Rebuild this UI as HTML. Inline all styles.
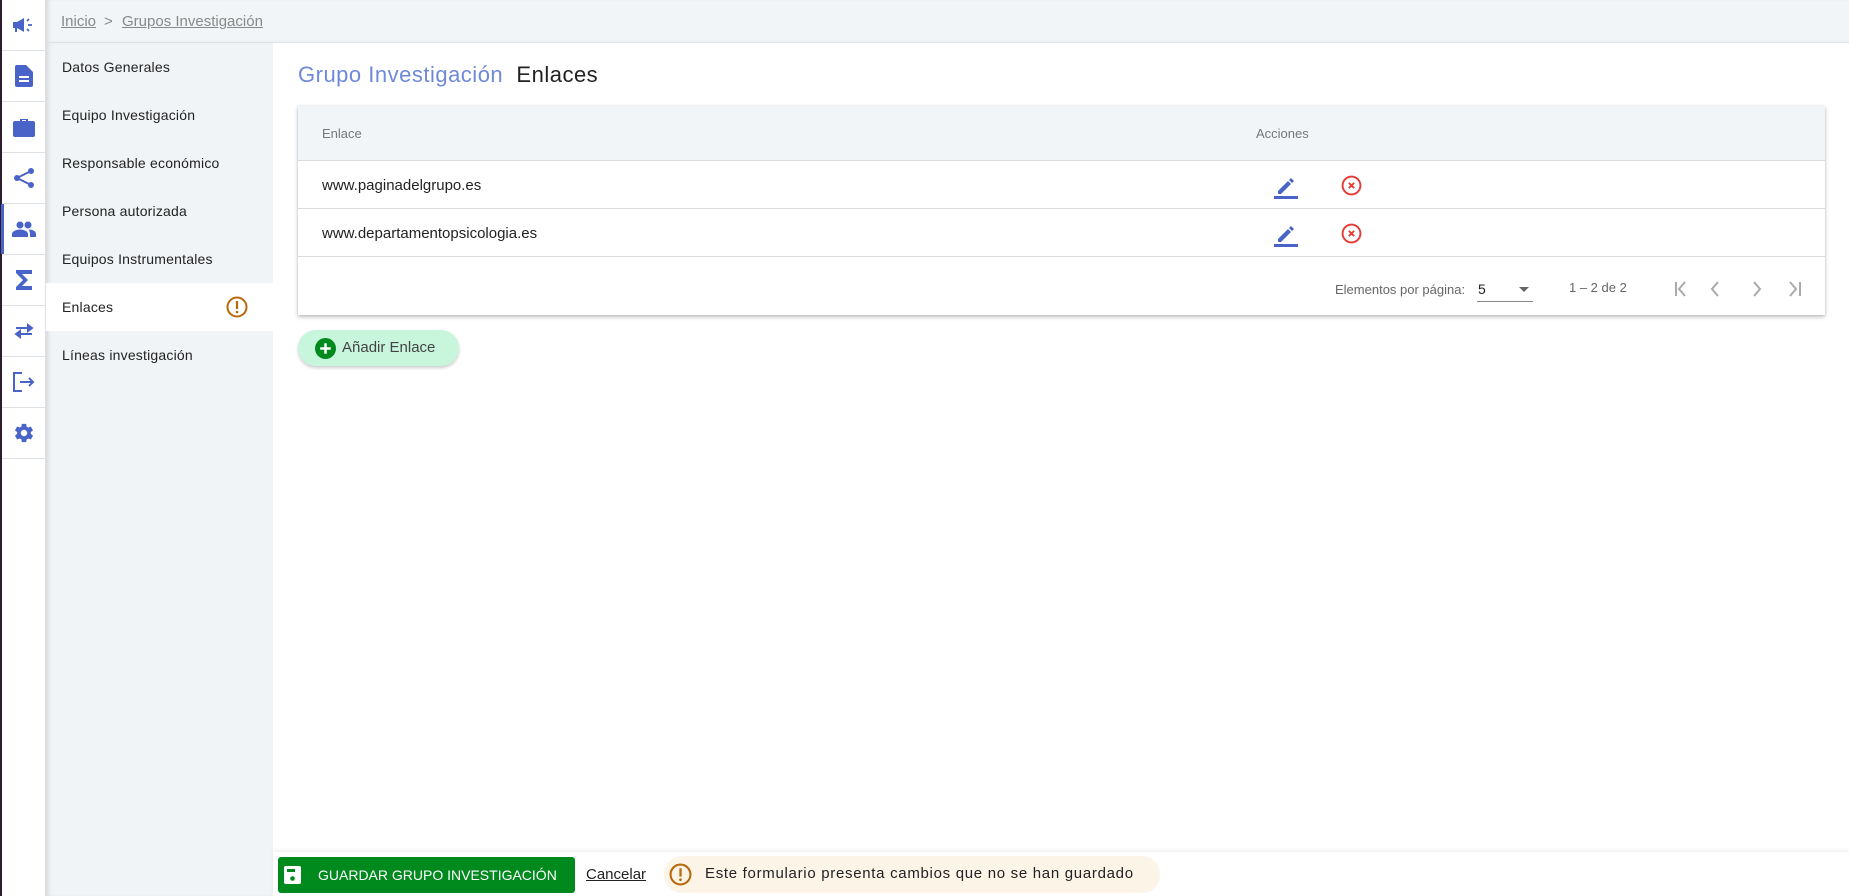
<!DOCTYPE html>
<html><head><meta charset="utf-8"><style>
*{box-sizing:border-box;margin:0;padding:0}
body{width:1849px;height:896px;overflow:hidden;background:#fff;font-family:"Liberation Sans",sans-serif;position:relative;color:#222}
.rail{position:absolute;left:0;top:0;width:46px;height:896px;background:#fff;border-left:2px solid #2b1b2b;border-right:1px solid #dde1e6}
.rail .c{height:51px;border-bottom:1px solid #dde1e6;display:flex;align-items:center;justify-content:center;position:relative}
.rail .c.act:before{content:"";position:absolute;left:-1px;top:0;bottom:0;width:3px;background:#4a63c8}
.top{position:absolute;left:46px;top:0;right:0;height:43px;background:#f2f5f8;border-bottom:1px solid #dde1e6;box-shadow:inset 4px 0 4px -2px rgba(0,0,0,.12)}
.top span{position:absolute;top:13px;font-size:15px;color:#888;text-decoration:underline}
.menu{position:absolute;left:46px;top:43px;width:227px;bottom:0;background:#f1f4f7;box-shadow:inset 4px 0 4px -2px rgba(0,0,0,.12)}
.menu div{height:48px;line-height:48px;padding-left:16px;font-size:14px;color:#222;position:relative;letter-spacing:.2px}
.menu div.act{background:#fff}
.title{position:absolute;left:298px;top:62px;font-size:22px;letter-spacing:.5px}
.card{position:absolute;left:298px;top:106px;width:1527px;height:209px;background:#fff;box-shadow:0 2px 4px rgba(0,0,0,.25),0 0 2px rgba(0,0,0,.1)}
.hd{height:55px;background:#f2f5f8;border-bottom:1px solid #dcdcdc;position:relative;font-size:13px;color:#777}
.row{height:48px;border-bottom:1px solid #dcdcdc;position:relative;font-size:15px}
.row span{position:absolute;left:24px;top:16px}
.pg{position:absolute;font-size:13px;color:#666}
.add{position:absolute;left:298px;top:330px;width:161px;height:36px;border-radius:18px;background:#c8f6dd;box-shadow:0 2px 3px rgba(0,0,0,.2);font-size:15px;color:#444}
.bot{position:absolute;left:273px;top:852px;right:0;bottom:0;background:#fff;box-shadow:0 -2px 4px rgba(0,0,0,.06)}
.save{position:absolute;left:278px;top:857px;width:297px;height:36px;background:#008a1e;border-radius:3px;color:#fff;font-size:14px}
.msg{position:absolute;left:664px;top:856px;width:496px;height:37px;border-radius:18px;background:#fdf4e8;font-size:15px}
</style></head><body>
<div class="rail">
<div class="c"><svg width="24" height="20" viewBox="0 0 24 20"><path d="M1 7h4l7-4v14l-7-4H5v4H3v-4H1z" fill="#4a63c8"/><path d="M15 6l2-2M15 14l2 2M16 10h4" stroke="#4a63c8" stroke-width="1.8"/></svg></div>
<div class="c"><svg width="18" height="22" viewBox="0 0 18 22"><path d="M2 0h9l7 7v13a2 2 0 0 1-2 2H2a2 2 0 0 1-2-2V2a2 2 0 0 1 2-2z" fill="#4a63c8"/><path d="M4 12h10M4 16h10" stroke="#fff" stroke-width="2"/></svg></div>
<div class="c"><svg width="22" height="20" viewBox="0 0 22 20"><path d="M7 4V2h8v2h5a2 2 0 0 1 2 2v12a2 2 0 0 1-2 2H2a2 2 0 0 1-2-2V6a2 2 0 0 1 2-2z" fill="#4a63c8"/><path d="M9 4V3h4v1z" fill="#fff"/></svg></div>
<div class="c"><svg width="22" height="22" viewBox="0 0 22 22"><circle cx="18" cy="4" r="3" fill="#4a63c8"/><circle cx="4" cy="11" r="3" fill="#4a63c8"/><circle cx="18" cy="18" r="3" fill="#4a63c8"/><path d="M18 4L4 11l14 7" stroke="#4a63c8" stroke-width="2" fill="none"/></svg></div>
<div class="c act"><svg width="24" height="16" viewBox="0 0 24 16"><circle cx="8" cy="4" r="3.5" fill="#4a63c8"/><circle cx="16" cy="4" r="3.5" fill="#4a63c8"/><path d="M0 16v-3c0-3 5-4.5 8-4.5s8 1.5 8 4.5v3zM17 8.5c3 0 7 1.5 7 4.5v3h-6v-3c0-2-1-3.5-1-4.5z" fill="#4a63c8"/></svg></div>
<div class="c"><svg width="16" height="20" viewBox="0 0 16 20"><path d="M0 0h16v4H6l6 6-6 6h10v4H0v-3l7-7-7-7z" fill="#4a63c8"/></svg></div>
<div class="c"><svg width="20" height="16" viewBox="0 0 20 16"><path d="M6 11h12M2 11l4-3v6zM14 5H2M18 5l-4-3v6z" stroke="#4a63c8" stroke-width="2" fill="#4a63c8"/></svg></div>
<div class="c"><svg width="22" height="20" viewBox="0 0 22 20"><path d="M9 1H1v18h8" stroke="#4a63c8" stroke-width="2" fill="none"/><path d="M7 10h13M16 6l4 4-4 4" stroke="#4a63c8" stroke-width="2" fill="none"/></svg></div>
<div class="c"><svg width="22" height="22" viewBox="0 0 24 24"><path fill="#4a63c8" d="M19.4 13c.04-.3.06-.6.06-1s-.02-.7-.07-1l2.1-1.6c.2-.15.24-.42.12-.64l-2-3.460c-.12-.22-.39-.3-.61-.22l-2.5 1c-.52-.4-1.08-.73-1.690-.98l-.38-2.65A.49.49 0 0 0 14 2h-4c-.25 0-.46.18-.49.42l-.38 2.65c-.61.25-1.17.59-1.69.98l-2.49-1c-.23-.09-.49 0-.61.22l-2 3.46c-.13.22-.07.49.12.64L4.57 11c-.04.3-.07.66-.07 1s.02.7.07 1l-2.11 1.65c-.19.15-.24.42-.12.64l2 3.46c.12.22.39.3.61.22l2.49-1c.52.4 1.08.73 1.69.98l.38 2.65c.03.24.24.42.49.42h4c.25 0 .46-.18.49-.42l.38-2.65c.61-.25 1.17-.59 1.69-.98l2.49 1c.23.09.49 0 .61-.22l2-3.46c.12-.22.07-.49-.12-.64zM12 15.5A3.5 3.5 0 1 1 12 8.5a3.5 3.5 0 0 1 0 7z"/></svg></div>
</div>
<div class="top"><span style="left:15px">Inicio</span><span style="left:58px;text-decoration:none">&gt;</span><span style="left:76px">Grupos Investigación</span></div>
<div class="menu">
<div>Datos Generales</div><div>Equipo Investigación</div><div>Responsable económico</div><div>Persona autorizada</div><div>Equipos Instrumentales</div>
<div class="act">Enlaces<svg style="position:absolute;left:180px;top:13px" width="22" height="22" viewBox="0 0 22 22"><circle cx="11" cy="11" r="9.5" stroke="#b8690a" stroke-width="2" fill="none"/><path d="M11 5v8" stroke="#b8690a" stroke-width="2.2"/><circle cx="11" cy="16" r="1.3" fill="#b8690a"/></svg></div>
<div>Líneas investigación</div>
</div>
<div class="title"><span style="color:#6e89d8">Grupo Investigación</span>&nbsp; <span>Enlaces</span></div>
<div class="card">
<div class="hd"><span style="position:absolute;left:24px;top:20px">Enlace</span><span style="position:absolute;left:958px;top:20px">Acciones</span></div>
<div class="row"><span>www.paginadelgrupo.es</span>
<svg style="position:absolute;left:976px;top:14px" width="24" height="24" viewBox="0 0 24 24"><path d="M4 16l10-10 3 3-10 10H4zM15 5l2-2 3 3-2 2z" fill="#4a63c8"/><rect x="0" y="21" width="24" height="3" fill="#4a63c8"/></svg>
<svg style="position:absolute;left:1043px;top:14px" width="21" height="21" viewBox="0 0 20 20"><circle cx="10" cy="10" r="8.5" stroke="#e53935" stroke-width="1.8" fill="none"/><path d="M7.5 7.5l5 5M12.5 7.5l-5 5" stroke="#e53935" stroke-width="1.8"/></svg></div>
<div class="row"><span>www.departamentopsicologia.es</span>
<svg style="position:absolute;left:976px;top:14px" width="24" height="24" viewBox="0 0 24 24"><path d="M4 16l10-10 3 3-10 10H4zM15 5l2-2 3 3-2 2z" fill="#4a63c8"/><rect x="0" y="21" width="24" height="3" fill="#4a63c8"/></svg>
<svg style="position:absolute;left:1043px;top:14px" width="21" height="21" viewBox="0 0 20 20"><circle cx="10" cy="10" r="8.5" stroke="#e53935" stroke-width="1.8" fill="none"/><path d="M7.5 7.5l5 5M12.5 7.5l-5 5" stroke="#e53935" stroke-width="1.8"/></svg></div>
<span class="pg" style="left:1037px;top:176px">Elementos por página:</span>
<span class="pg" style="left:1180px;top:175px;color:#222;font-size:14px">5</span>
<div style="position:absolute;left:1179px;top:195px;width:56px;height:1px;background:#888"></div>
<div style="position:absolute;left:1221px;top:181px;border:5px solid transparent;border-top-color:#666"></div>
<span class="pg" style="left:1271px;top:174px">1 – 2 de 2</span>
<svg style="position:absolute;left:1370px;top:172px" width="140" height="22" viewBox="0 0 140 22" fill="none" stroke="#aaa" stroke-width="2"><path d="M8 4v14M17 4l-6 7 6 7M50 4l-6 7 6 7M86 4l6 7-6 7M122 4l6 7-6 7M132 4v14"/></svg>
</div>
<div class="add"><svg style="position:absolute;left:17px;top:8px" width="21" height="21" viewBox="0 0 20 20"><circle cx="10" cy="10" r="10" fill="#008a1e"/><path d="M10 5v10M5 10h10" stroke="#fff" stroke-width="2.4"/></svg><span style="position:absolute;left:44px;top:9px">Añadir Enlace</span></div>
<div class="bot"></div>
<div class="save"><svg style="position:absolute;left:6px;top:9px" width="17" height="18" viewBox="0 0 17 18"><rect width="17" height="18" rx="2" fill="#fff"/><rect x="3" y="3" width="8" height="3" fill="#008a1e"/><circle cx="8.5" cy="12.5" r="2.3" fill="#008a1e"/></svg><span style="position:absolute;left:40px;top:10px">GUARDAR GRUPO INVESTIGACIÓN</span></div>
<span style="position:absolute;left:586px;top:866px;font-size:15px;text-decoration:underline">Cancelar</span>
<div class="msg"><svg style="position:absolute;left:5px;top:7px" width="23" height="23" viewBox="0 0 22 22"><circle cx="11" cy="11" r="9.5" stroke="#b8690a" stroke-width="2" fill="none"/><path d="M11 5v8" stroke="#b8690a" stroke-width="2.2"/><circle cx="11" cy="16" r="1.3" fill="#b8690a"/></svg><span style="position:absolute;left:41px;top:9px;letter-spacing:.7px">Este formulario presenta cambios que no se han guardado</span></div>
</body></html>
